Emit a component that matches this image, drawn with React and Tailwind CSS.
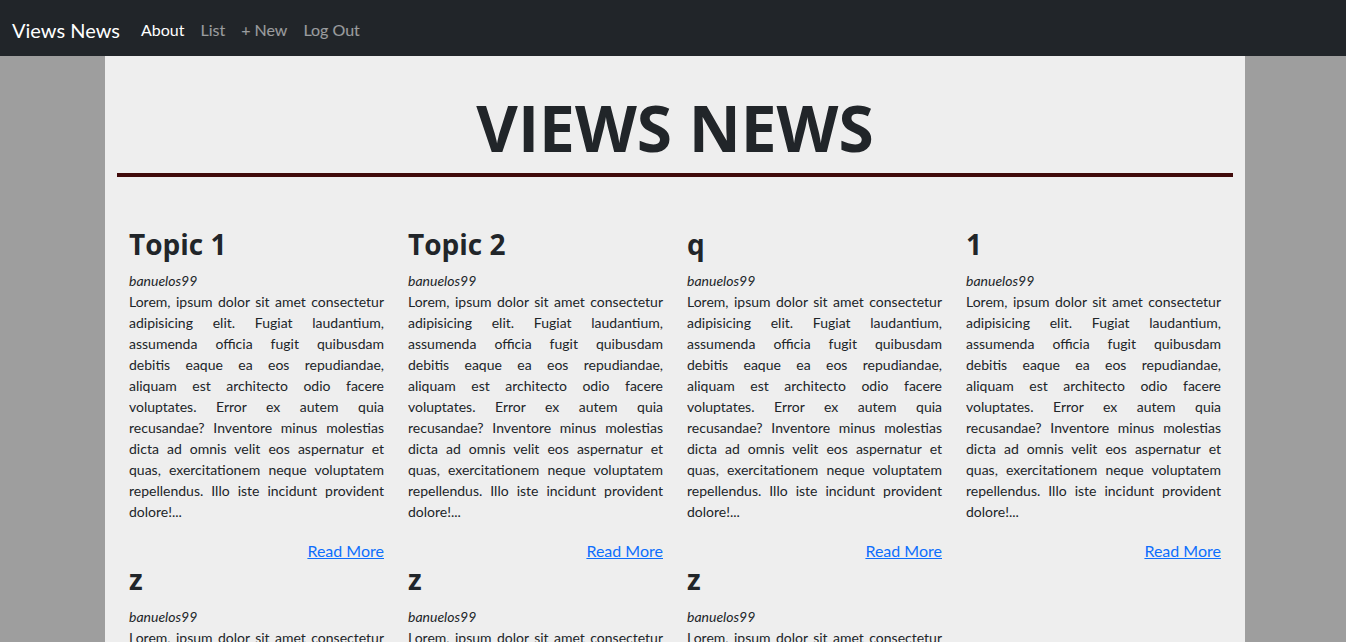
const lines = [
  "Lorem, ipsum dolor sit amet consectetur",
  "adipisicing elit. Fugiat laudantium,",
  "assumenda officia fugit quibusdam",
  "debitis eaque ea eos repudiandae,",
  "aliquam est architecto odio facere",
  "voluptates. Error ex autem quia",
  "recusandae? Inventore minus molestias",
  "dicta ad omnis velit eos aspernatur et",
  "quas, exercitationem neque voluptatem",
  "repellendus. Illo iste incidunt provident",
];

const posts = [
  { title: "Topic 1" },
  { title: "Topic 2" },
  { title: "q" },
  { title: "1" },
  { title: "z" },
  { title: "z" },
  { title: "z" },
];

function Card({ title }) {
  return (
    <div className="px-3">
      <h3 className="font-['Open_Sans',sans-serif] text-[28px] leading-[1.2] font-bold mb-[9px]">
        {title}
      </h3>
      <p className="italic text-[14px] leading-[21px]">banuelos99</p>
      <p className="text-[14px] leading-[21px] mb-[17px]">
        {lines.map((l, i) => (
          <span key={i} className="block text-justify [text-align-last:justify]">
            {l}
          </span>
        ))}
        <span className="block">dolore!...</span>
      </p>
      <div className="text-right text-[16px] leading-6">
        <a href="#" className="text-[#0d6efd] underline">
          Read More
        </a>
      </div>
    </div>
  );
}

export default function App() {
  return (
    <div className="min-h-screen bg-[#9e9e9e] text-[#212529] font-['Lato',sans-serif]">
      <nav className="h-14 bg-[#212529] flex items-center px-3 pt-[3px]">
        <a href="#" className="text-white text-[20px] mr-[13px]">
          Views News
        </a>
        <div className="flex text-[16px]">
          <a href="#" className="px-2 text-white">About</a>
          <a href="#" className="px-2 text-white/55">List</a>
          <a href="#" className="px-2 text-white/55">+ New</a>
          <a href="#" className="px-2 text-white/55">Log Out</a>
        </div>
      </nav>
      <div className="pl-1">
        <main className="w-[1140px] mx-auto bg-[#eeeeee] px-3 pt-[34px] pb-10">
          <h1 className="font-['Open_Sans',sans-serif] text-center text-[64px] leading-[1.2] font-bold mb-[6px]">
            VIEWS NEWS
          </h1>
          <div className="h-1 bg-[#400a0a]" />
          <div className="grid grid-cols-4 mt-[51px]">
            {posts.map((p, i) => (
              <Card key={i} title={p.title} />
            ))}
          </div>
        </main>
      </div>
    </div>
  );
}
